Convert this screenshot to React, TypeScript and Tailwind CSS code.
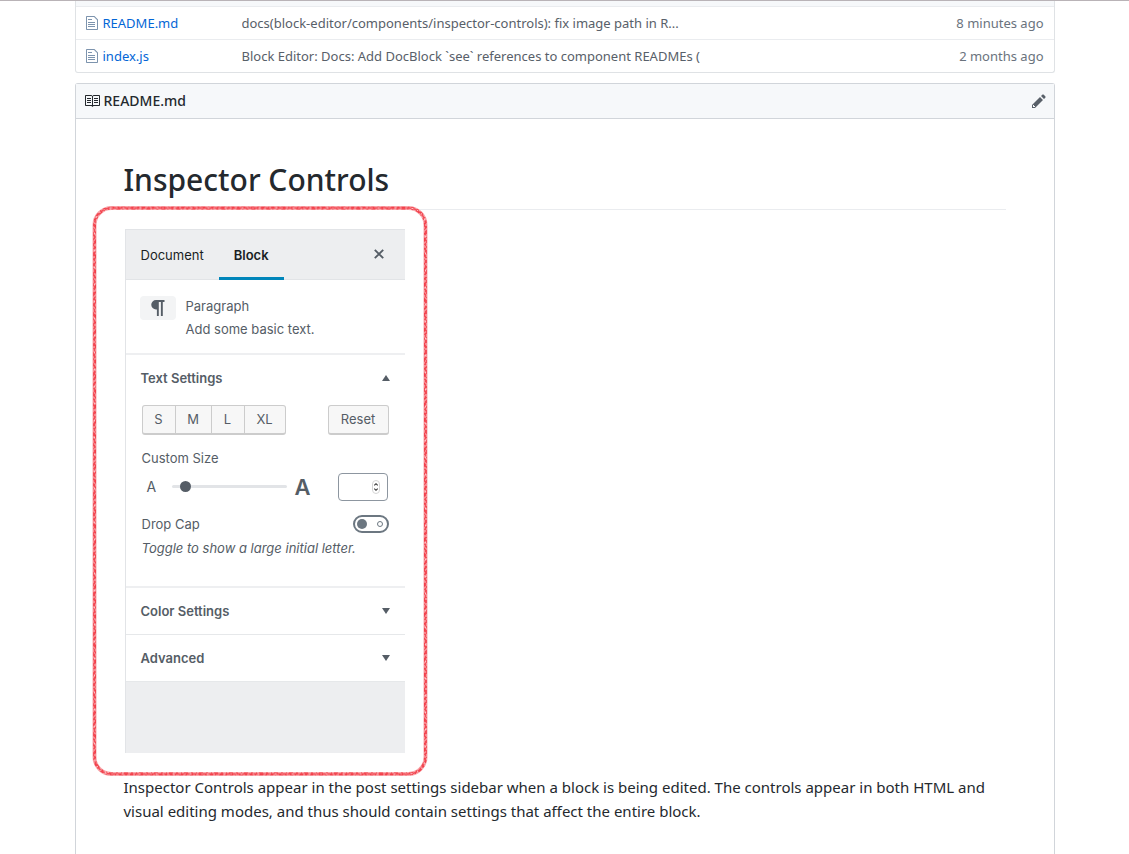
import React from "react";

const files = [
  {
    name: "README.md",
    message: "docs(block-editor/components/inspector-controls): fix image path in R...",
    age: "8 minutes ago",
  },
  {
    name: "index.js",
    message: "Block Editor: Docs: Add DocBlock `see` references to component READMEs (",
    age: "2 months ago",
  },
];

function FileIcon() {
  return (
    <svg className="h-4 w-3" viewBox="0 0 12 16" fill="currentColor" aria-hidden="true">
      <path d="M6 5H2V4h4v1zM2 8h7V7H2v1zm0 2h7V9H2v1zm0 2h7v-1H2v1zm10-7.5V14c0 .55-.45 1-1 1H1c-.55 0-1-.45-1-1V2c0-.55.45-1 1-1h7.5L12 4.5zM11 5L8 2H1v12h10V5z" />
    </svg>
  );
}

function BookIcon() {
  return (
    <svg className="size-4" viewBox="0 0 16 16" fill="currentColor" aria-hidden="true">
      <path d="M3 5h4v1H3V5zm0 3h4V7H3v1zm0 2h4V9H3v1zm11-5h-4v1h4V5zm0 2h-4v1h4V7zm0 2h-4v1h4V9zm2-6v9c0 .55-.45 1-1 1H9.5l-1 1-1-1H2c-.55 0-1-.45-1-1V3c0-.55.45-1 1-1h5.5l1 1 1-1H15c.55 0 1 .45 1 1zm-8 .5L7.5 3H2v9h6V3.5zm7-.5H9.5l-.5.5V12h6V3z" />
    </svg>
  );
}

function PencilIcon() {
  return (
    <svg className="h-4 w-3.5" viewBox="0 0 14 16" fill="currentColor" aria-hidden="true">
      <path d="M0 12v3h3l8-8-3-3-8 8zm3 2H1v-2h1v1h1v1zm10.3-9.3L12 6 9 3l1.3-1.3a.996.996 0 0 1 1.41 0l1.59 1.59c.39.39.39 1.02 0 1.41z" />
    </svg>
  );
}

function Triangle({ up = false }: { up?: boolean }) {
  return (
    <svg className="h-1.5 w-2" viewBox="0 0 8 6" fill="currentColor" aria-hidden="true">
      <path d={up ? "M4 0l4 6H0z" : "M0 0h8L4 6z"} />
    </svg>
  );
}

function RedMarker() {
  return (
    <svg
      className="pointer-events-none absolute -left-8 -top-6 h-[572px] w-[336px]"
      viewBox="0 0 336 572"
      fill="none"
      aria-hidden="true"
    >
      <rect x="2.5" y="3" width="331" height="566" rx="17" stroke="#f8a9ad" strokeWidth="4" />
      <rect x="2.5" y="3" width="331" height="566" rx="17" stroke="#f2505a" strokeWidth="1.6" />
      <rect x="1.8" y="2.3" width="332.4" height="567.4" rx="17.5" stroke="#f2404b" strokeWidth="1.2" strokeDasharray="3 3 2 2 4 3 1 2" />
      <rect x="3.4" y="3.9" width="329.2" height="564.2" rx="16" stroke="#f2404b" strokeWidth="1.2" strokeDasharray="2 3 4 2 1 3" />
      <rect x="2.5" y="3" width="331" height="566" rx="17" stroke="#fac0c4" strokeWidth="1.2" strokeDasharray="1 4 1 5 2 4" />
    </svg>
  );
}

function SectionHeading({ title, open = false }: { title: string; open?: boolean }) {
  return (
    <button type="button" className="flex h-[46px] w-full items-center justify-between px-[15px] text-left font-semibold">
      {title}
      <Triangle up={open} />
    </button>
  );
}

function InspectorPanel() {
  return (
    <section
      aria-label="Block inspector"
      className="flex h-[524px] w-[280px] flex-col border-l border-t border-[#e2e4e7] bg-[#edeef0] font-['Inter',sans-serif] text-[13px] leading-5 text-[#555d66]"
    >
      <div className="flex h-[50px] shrink-0 items-stretch border-b border-[#e2e4e7] text-[#191e23]">
        <button type="button" className="px-[15px] pt-0.5">
          Document
        </button>
        <button type="button" className="-mb-px border-b-[3px] border-[#0085ba] px-[15px] pt-[3px] font-semibold">
          Block
        </button>
        <button type="button" aria-label="Close settings" className="ml-auto flex w-[52px] items-center justify-center text-[#555d66]">
          <svg className="size-2.5" viewBox="0 0 10 10" stroke="currentColor" strokeWidth="1.9" aria-hidden="true">
            <path d="M0.8 0.8l8.4 8.4M9.2 0.8L0.8 9.2" />
          </svg>
        </button>
      </div>

      <div className="bg-white">
        <div className="flex h-[75px] gap-2.5 border-b-2 border-[#eeeff1] px-3.5 pt-4">
          <span className="flex h-6 w-9 shrink-0 items-center justify-center rounded bg-[#f3f4f5]">
            <svg className="h-4 w-3.5" viewBox="0 0 14 16" fill="currentColor" aria-hidden="true">
              <path d="M5 0h8.5v2h-1.7v14H9.9V2H7.8v14H5.9V9.5H5A4.75 4.75 0 0 1 5 0z" />
            </svg>
          </span>
          <div>
            <p>Paragraph</p>
            <p className="mt-[3px]">Add some basic text.</p>
          </div>
        </div>

        <div className="h-[233px] border-b-2 border-[#eeeff1]">
          <SectionHeading title="Text Settings" open />
          <div className="px-4">
            <div className="mt-1 flex h-[30px] items-stretch justify-between">
              <div className="flex divide-x divide-[#ccc] rounded-[3px] border border-b-2 border-[#ccc] bg-[#f7f7f7]">
                <button type="button" className="w-[33px]">S</button>
                <button type="button" className="w-9">M</button>
                <button type="button" className="w-[33px]">L</button>
                <button type="button" className="w-10">XL</button>
              </div>
              <button type="button" className="w-[61px] rounded-[3px] border border-b-2 border-[#ccc] bg-[#f7f7f7]">
                Reset
              </button>
            </div>
            <label htmlFor="size-range" className="mt-[13px] block">
              Custom Size
            </label>
            <div className="mt-[5px] flex h-7 items-center">
              <span className="w-[30px] pl-[5px] text-sm">A</span>
              <input
                id="size-range"
                type="range"
                min={0}
                max={100}
                defaultValue={8}
                className="h-[3px] w-[115px] appearance-none rounded-full bg-[#e2e4e7] [&::-webkit-slider-thumb]:size-[11px] [&::-webkit-slider-thumb]:appearance-none [&::-webkit-slider-thumb]:rounded-full [&::-webkit-slider-thumb]:bg-[#555d66]"
              />
              <span className="ml-2 text-[22px] font-semibold">A</span>
              <div className="relative ml-auto mr-px h-7 w-[50px]">
                <input
                  type="text"
                  inputMode="numeric"
                  aria-label="Custom size value"
                  className="h-full w-full rounded border border-[#8d96a0] bg-white pl-2 pr-4"
                />
                <svg className="absolute right-2 top-[7px] h-3.5 w-2" viewBox="0 0 8 14" fill="none" aria-hidden="true">
                  <rect x="0.5" y="0.5" width="7" height="13" rx="3.5" stroke="#d5d5d5" />
                  <path d="M2.3 5.4L4 3.7l1.7 1.7M2.3 8.6L4 10.3l1.7-1.7" stroke="#333" strokeWidth="1.1" />
                </svg>
              </div>
            </div>
            <div className="mt-[13px] flex items-center justify-between">
              <label htmlFor="drop-cap">Drop Cap</label>
              <input
                id="drop-cap"
                type="checkbox"
                className="flex h-[18px] w-9 appearance-none items-center justify-between rounded-full border-2 border-[#6c7781] bg-white pl-0.5 pr-1 before:size-2.5 before:rounded-full before:bg-[#6c7781] before:content-[''] after:size-1.5 after:rounded-full after:border-[1.5px] after:border-[#6c7781] after:content-['']"
              />
            </div>
            <p className="mt-1 italic">Toggle to show a large initial letter.</p>
          </div>
        </div>

        <div className="border-b border-[#e6e8ea]">
          <SectionHeading title="Color Settings" />
        </div>
        <div className="border-b border-[#e6e8ea]">
          <SectionHeading title="Advanced" />
        </div>
      </div>
    </section>
  );
}

export default function App() {
  return (
    <div className="flex min-h-screen flex-col border-t border-[#b9b3b7] bg-white font-['Noto_Sans',sans-serif] text-[#24292e]">
      <div className="mx-auto flex w-full max-w-[980px] grow flex-col">
        <div className="rounded-b-[3px] border border-t-0 border-[#dfe2e5]">
          <div className="h-[5px] bg-[#f6f8fa]" />
          <table className="w-full table-fixed text-[13px] leading-5 text-[#6a737d]">
            <tbody>
              {files.map((file) => (
                <tr key={file.name} className="h-[33px] border-t border-[#eaecef] last:h-8">
                  <td className="w-[166px] pl-2.5">
                    <span className="flex items-center gap-[5px] text-[#7d94ae]">
                      <FileIcon />
                      <a href="#" className="text-[#0366d6]">
                        {file.name}
                      </a>
                    </span>
                  </td>
                  <td className="truncate text-[#586069]">{file.message}</td>
                  <td className="w-[140px] pr-2.5 text-right">{file.age}</td>
                </tr>
              ))}
            </tbody>
          </table>
        </div>

        <article className="mt-2.5 grow rounded-t-[3px] border border-b-0 border-[#d1d5da]">
          <header className="flex h-[35px] items-center justify-between border-b border-[#d1d5da] bg-[#f6f8fa] px-2">
            <h3 className="flex items-center gap-1 text-sm font-medium">
              <BookIcon />
              README.md
            </h3>
            <button type="button" aria-label="Edit this file" className="text-[#586069]">
              <PencilIcon />
            </button>
          </header>
          <div className="px-12 pb-7 pt-[41px]">
            <h1 className="border-b border-[#eaecef] pb-[9px] text-3xl leading-10 font-medium">Inspector Controls</h1>
            <div className="relative mt-[19px] w-fit pl-px">
              <InspectorPanel />
              <RedMarker />
            </div>
            <p className="mt-[22px] text-[15px] leading-6">
              Inspector Controls appear in the post settings sidebar when a block is being edited. The controls appear in both HTML and
              visual editing modes, and thus should contain settings that affect the entire block.
            </p>
          </div>
        </article>
      </div>
    </div>
  );
}
